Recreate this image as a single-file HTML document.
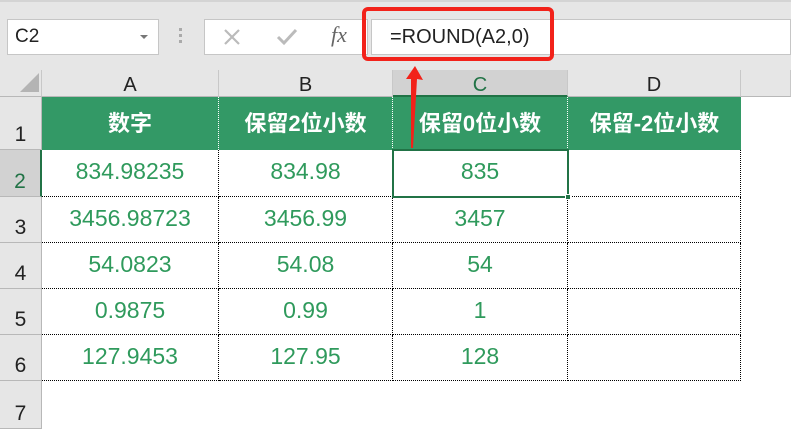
<!DOCTYPE html>
<html><head><meta charset="utf-8"><style>
*{margin:0;padding:0;box-sizing:border-box}
body{width:791px;height:429px;overflow:hidden;background:#fff;position:relative;font-family:"Liberation Sans","Noto Sans CJK SC",sans-serif}
.a{position:absolute}
.top{left:0;top:0;width:791px;height:70px;background:#e6e6e6;border-top:2px solid #d4d4d4}
.box{background:#fff;border:1px solid #c6c6c6}
.ch{top:70px;height:27px;background:#e6e6e6;border-right:1px solid #c8c8c8;border-bottom:1px solid #b8b8b8;text-align:center;font-size:20px;line-height:30px;color:#222}
.rh{left:0;width:42px;background:#e6e6e6;border-right:1px solid #b8b8b8;border-bottom:1px solid #b8b8b8;text-align:center;font-size:21px;color:#222;display:flex;align-items:flex-end;justify-content:center;padding-bottom:2px}
.hd{top:97px;height:53px;background:#339966;color:#fff;font-weight:bold;font-size:22px;display:flex;align-items:center;justify-content:center;padding-bottom:3px}
.c{color:#2f9a5c;font-size:23px;text-align:center;border-bottom:1px dotted #000;border-right:1px dotted #000;display:flex;align-items:center;justify-content:center;padding-bottom:3px}
.r{position:absolute;left:42px;display:flex}
.r div{height:100%}
</style></head><body>
<div class="a top"></div>
<div class="a box" style="left:7px;top:19px;width:152px;height:36px;font-size:19px;line-height:34px;padding-left:7px;color:#222">C2</div>
<div class="a" style="left:140px;top:35px;width:0;height:0;border-left:4px solid transparent;border-right:4px solid transparent;border-top:4px solid #777"></div>
<div class="a" style="left:179px;top:28px;width:3px;height:3px;background:#aaa;box-shadow:0 6px #aaa,0 12px #aaa"></div>
<div class="a box" style="left:204px;top:19px;width:164px;height:36px"></div>
<svg class="a" style="left:222px;top:27px" width="20" height="20"><path d="M3 3L17 17M17 3L3 17" stroke="#bbb" stroke-width="2.2"/></svg>
<svg class="a" style="left:276px;top:27px" width="22" height="20"><path d="M2 10L8 16L20 3" stroke="#bbb" stroke-width="3" fill="none"/></svg>
<div class="a" style="left:331px;top:22px;font-family:'Liberation Serif',serif;font-style:italic;font-size:22px;color:#666">fx</div>
<div class="a box" style="left:371px;top:19px;width:420px;height:36px;font-size:20px;line-height:35px;padding-left:18px;color:#222">=ROUND(A2,0)</div>
<div class="a" style="left:362px;top:7px;width:192px;height:54px;border:4px solid #f2221a;border-radius:6px"></div>
<div class="a ch" style="left:0;width:42px"></div>
<div class="a" style="left:20px;top:73px;width:0;height:0;border-left:19px solid transparent;border-bottom:19px solid #b4b4b4"></div>
<div class="a ch" style="left:42px;width:177px">A</div>
<div class="a ch" style="left:219px;width:174px">B</div>
<div class="a ch" style="left:393px;width:175px;background:#d2d2d2;color:#217346;border-bottom:2px solid #217346">C</div>
<div class="a ch" style="left:568px;width:173px">D</div>
<div class="a ch" style="left:741px;width:50px"></div>
<div class="a rh" style="top:97px;height:53px">1</div>
<div class="a rh" style="top:150px;height:47px;background:#d2d2d2;color:#217346;border-right:2px solid #217346">2</div>
<div class="a rh" style="top:197px;height:46px">3</div>
<div class="a rh" style="top:243px;height:46px">4</div>
<div class="a rh" style="top:289px;height:46px">5</div>
<div class="a rh" style="top:335px;height:46px">6</div>
<div class="a rh" style="top:381px;height:48px">7</div>
<div class="a hd" style="left:42px;width:177px;border-right:1px dotted #fff">数字</div>
<div class="a hd" style="left:219px;width:174px;border-right:1px dotted #fff">保留2位小数</div>
<div class="a hd" style="left:393px;width:175px;border-right:1px dotted #fff">保留0位小数</div>
<div class="a hd" style="left:568px;width:173px">保留-2位小数</div>
<div class="r" style="top:150px;height:47px"><div class="c" style="width:177px">834.98235</div><div class="c" style="width:174px">834.98</div><div class="c" style="width:175px">835</div><div class="c" style="width:173px"></div></div>
<div class="r" style="top:197px;height:46px"><div class="c" style="width:177px">3456.98723</div><div class="c" style="width:174px">3456.99</div><div class="c" style="width:175px">3457</div><div class="c" style="width:173px"></div></div>
<div class="r" style="top:243px;height:46px"><div class="c" style="width:177px">54.0823</div><div class="c" style="width:174px">54.08</div><div class="c" style="width:175px">54</div><div class="c" style="width:173px"></div></div>
<div class="r" style="top:289px;height:46px"><div class="c" style="width:177px">0.9875</div><div class="c" style="width:174px">0.99</div><div class="c" style="width:175px">1</div><div class="c" style="width:173px"></div></div>
<div class="r" style="top:335px;height:46px"><div class="c" style="width:177px">127.9453</div><div class="c" style="width:174px">127.95</div><div class="c" style="width:175px">128</div><div class="c" style="width:173px"></div></div>
<div class="a" style="left:392px;top:149px;width:177px;height:49px;border:2px solid #217346"></div>
<div class="a" style="left:565px;top:194px;width:6px;height:6px;background:#217346;border:1px solid #fff"></div>
<svg class="a" style="left:395px;top:60px" width="30" height="95"><path d="M20 6L28 20L22 19L18 88L16 88L16 19L11 19Z" fill="#f2221a"/></svg>
</body></html>
